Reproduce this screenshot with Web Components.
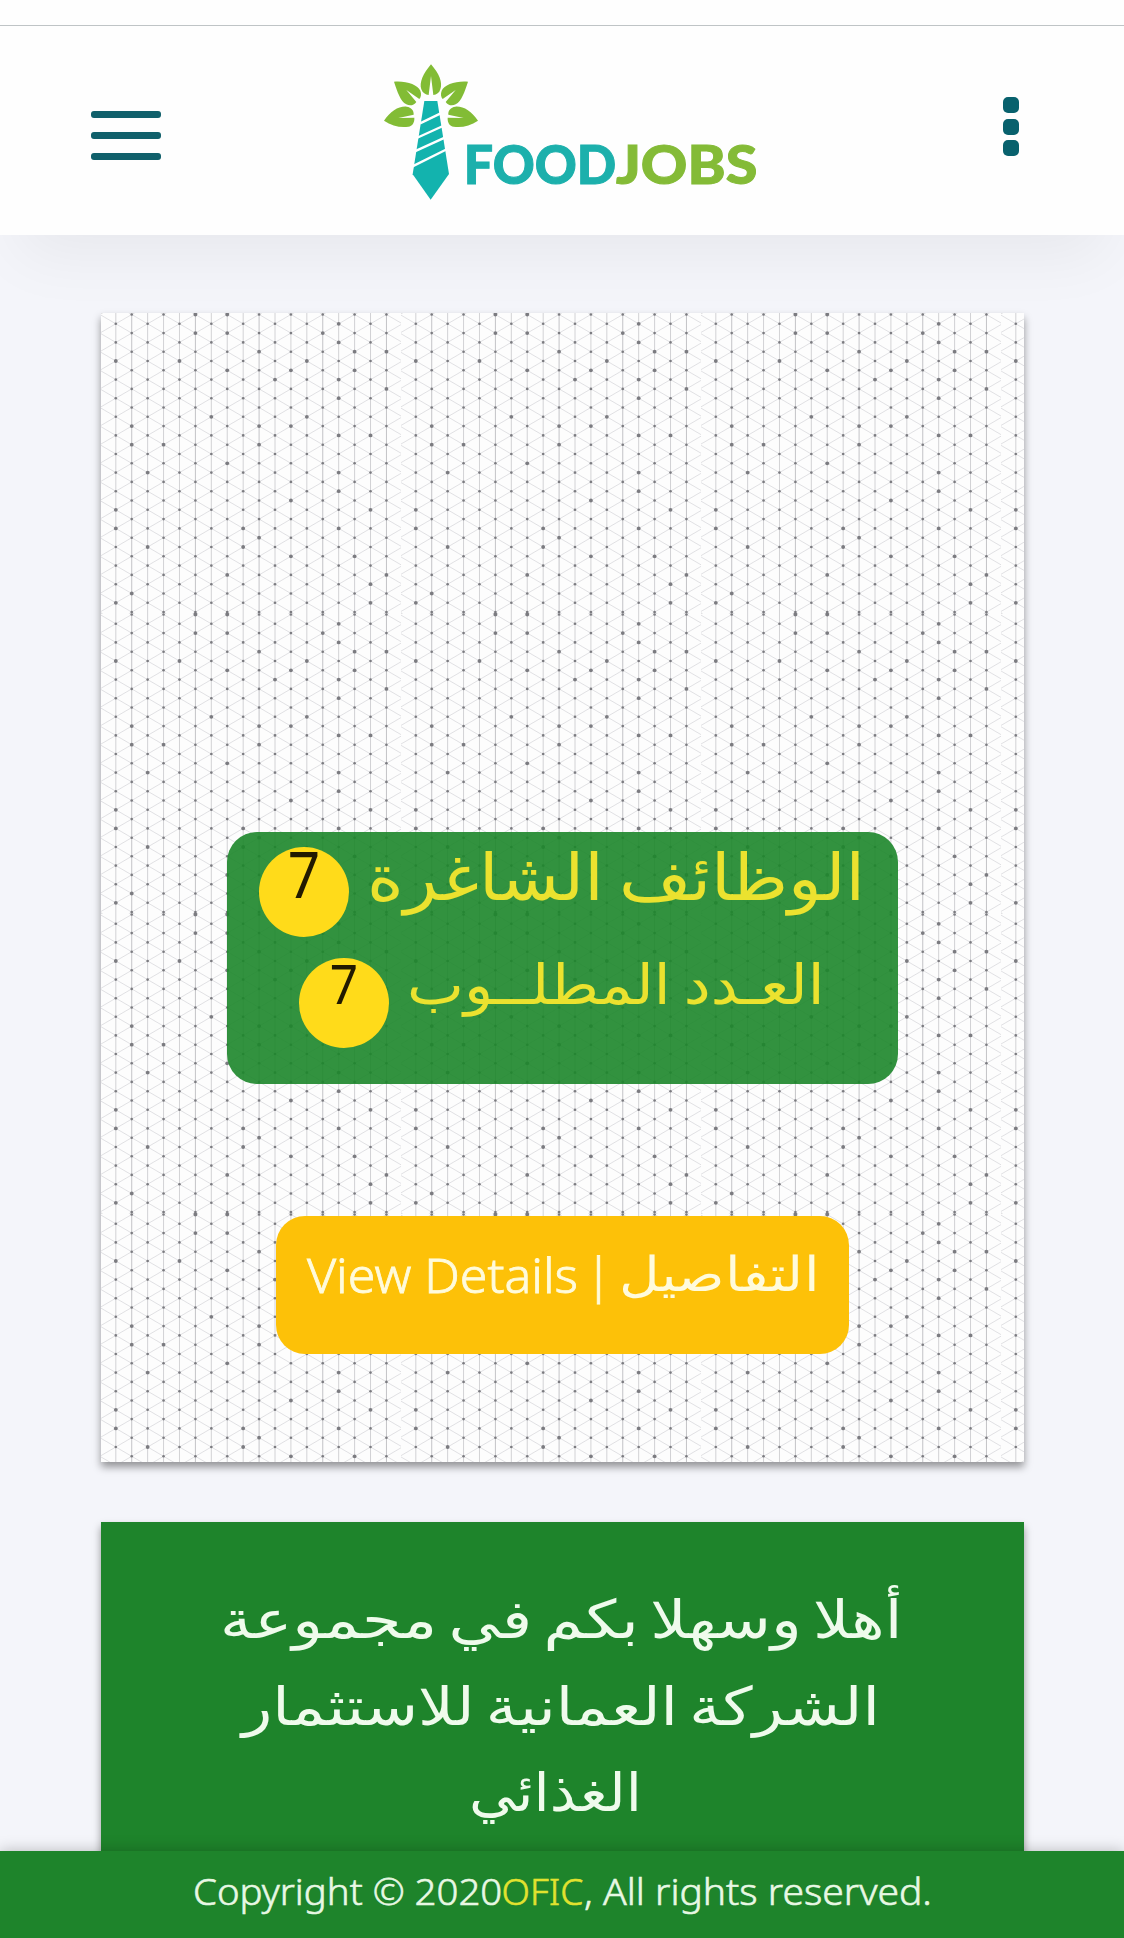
<!DOCTYPE html>
<html lang="ar">
<head>
<meta charset="utf-8">
<title>FoodJobs</title>
<style>
  body {
    margin: 0;
    height: 1938px;
    overflow: hidden;
    background: #f4f5fa;
    font-family: "Noto Sans", "DejaVu Sans", sans-serif;
  }
</style>
</head>
<body>
<fj-page>
  <fj-header slot="header"></fj-header>
  <fj-vacancy-card>
    <fj-count size="64" line="62" width="498" count="7" count-size="63" count-line="54">الوظائف الشاغرة</fj-count>
    <fj-count size="55" line="55" width="418" count="7" count-size="55" count-line="50">العـدد المطلــوب</fj-count>
    <fj-button slot="action">
      <fit-text width="271">View Details</fit-text>
      <fit-text width="27">|</fit-text>
      <fit-text class="ar" width="200" rtl>التفاصيل</fit-text>
    </fj-button>
  </fj-vacancy-card>
  <fj-welcome>
    <fit-text width="683" rtl style="margin-right: 3px">أهلا وسهلا بكم في مجموعة</fit-text>
    <fit-text width="638" rtl style="margin-right: 3px">الشركة العمانية للاستثمار</fit-text>
    <fit-text width="173" rtl style="margin-right: 15px">الغذائي</fit-text>
  </fj-welcome>
  <fj-footer slot="footer">
    <fit-text width="309">Copyright © 2020</fit-text>
    <fit-text width="82" style="color: #e2e22f">OFIC</fit-text>
    <fit-text width="348">, All rights reserved.</fit-text>
  </fj-footer>
</fj-page>

<script>
// one line of text, stretched or squeezed to a given width
class FitText extends HTMLElement {
  constructor() {
    super();
    this.attachShadow({ mode: 'open' });
    this.shadowRoot.innerHTML = `
      <style>
        :host { display: block; direction: ltr; white-space: nowrap; }
        span { display: inline-block; transform-origin: 0 50%; }
      </style>
      <span><slot></slot></span>
    `;
  }

  connectedCallback() {
    const span = this.shadowRoot.querySelector('span');
    const width = Number(this.getAttribute('width'));
    if (this.hasAttribute('rtl')) span.dir = 'rtl';
    this.style.width = width + 'px';
    requestAnimationFrame(() => this.fit(span, width));
    this.fit(span, width);
  }

  fit(span, width) {
    const natural = span.offsetWidth;
    if (natural) span.style.transform = `scaleX(${width / natural})`;
  }
}

class FjPage extends HTMLElement {
  constructor() {
    super();
    this.attachShadow({ mode: 'open' });
    this.shadowRoot.innerHTML = `
      <style>
        :host { display: flex; flex-direction: column; height: 1938px; overflow: hidden; }
        main {
          flex: 1;
          min-height: 0;
          display: flex;
          flex-direction: column;
          gap: 60px;
          padding: 78px 100px 0 101px;
        }
      </style>
      <slot name="header"></slot>
      <main><slot></slot></main>
      <slot name="footer"></slot>
    `;
  }
}

class FjHeader extends HTMLElement {
  constructor() {
    super();
    this.attachShadow({ mode: 'open' });
    this.shadowRoot.innerHTML = `
      <style>
        :host { display: block; background: #fefefe; padding-top: 25px;
          box-shadow: 0 40px 60px -20px rgba(0, 0, 0, .055);
        }
        .bar {
          box-sizing: border-box;
          height: 210px;
          border-top: 1px solid #bfc4c6;
          display: flex;
          align-items: flex-start;
          padding: 0 105px 0 91px;
        }
        .menu { display: grid; gap: 14px; width: 70px; margin-top: 85px; }
        .menu i { height: 7px; border-radius: 3px; background: #10606b; }
        .logo { margin: 24px auto 0 209px; }
        .more { display: grid; gap: 5.5px; width: 16px; margin-top: 71px; }
        .more i { height: 16px; border-radius: 5px; background: #08616d; }
      </style>
      <div class="bar">
        <div class="menu"><i></i><i></i><i></i></div>
        <svg class="logo" width="400" height="160" viewBox="0 0 1200 480">
          <g fill="#82bc35">
            <path d="M183 43C207 70 219 98 211 118C208 129 200 134 190 135L183 78L176 135C166 134 158 129 154 118C147 98 160 70 183 43Z"/>
            <path id="up" d="M72 95C109 92 143 104 151 122C155 132 153 141 148 147L109 120L139 156C132 166 120 169 109 163C91 154 82 124 72 95Z"/>
            <path id="low" d="M42 212C61 184 86 168 110 170C124 172 132 181 131 194L85 204L133 203C134 218 127 228 115 230C91 234 65 227 42 212Z"/>
            <use href="#up" transform="matrix(-1 0 0 1 366 0)"/>
            <use href="#low" transform="matrix(-1 0 0 1 366 0)"/>
          </g>
          <path fill="#13b3ae" d="M163 153H202L237 372L182 449L128 373Z"/>
          <path stroke="#fff" stroke-width="7" d="M150 220L212 190M140 264L219 228M134 304L226 262M126 350L232 297"/>
          <g font-family="Lato" font-weight="900" font-size="161" stroke-width="3">
            <text x="281" y="402" fill="#1cb0ac" stroke="#1cb0ac" textLength="458" lengthAdjust="spacingAndGlyphs">FOOD</text>
            <text x="738" y="402" fill="#84bb37" stroke="#84bb37" textLength="424" lengthAdjust="spacingAndGlyphs">JOBS</text>
          </g>
        </svg>
        <div class="more"><i></i><i></i><i></i></div>
      </div>
    `;
  }
}

// 300px tile of the triangular mesh: 18 columns of dots, odd columns half a step up
const COL = 15.92;
const ROW = 18.6;
const BIG = {
  0: [2, 10, 11, 15], 1: [6, 7, 15], 2: [8, 12], 3: [7], 4: [2],
  5: [0, 1], 6: [5], 7: [0, 1, 3, 8, 14], 8: [11, 12], 9: [2, 6, 7, 12],
  10: [3], 11: [3, 6, 10, 13], 12: [2, 5], 13: [1], 14: [0, 1, 3, 4, 6, 8, 9, 11],
  15: [2, 3, 13], 16: [6, 10, 14, 15], 17: [2, 4, 14]
};

function meshTile() {
  let lines = '';
  let dots = '';
  for (let k = -1; k <= 18; k++) {
    const x = 14.8 + k * COL;
    const odd = Math.abs(k) % 2;
    if (k >= 0 && k < 18) {
      lines += `<path d="M${x} 0V300" stroke="${k % 4 === 1 ? '#b4b4b9' : '#c6c6ca'}" stroke-width=".8"/>`;
    }
    for (let j = -1; j <= 17; j++) {
      const y = (odd ? 1.5 : 10.8) + j * ROW;
      lines += `<path d="M${x} ${y}l${COL} ${ROW / 2}M${x} ${y}l${COL} ${-ROW / 2}"/>`;
      if (k < 0 || k > 17 || j < 0) continue;
      const r = BIG[k].includes(j) ? 1.9 : 1.3;
      dots += `<circle cx="${x}" cy="${y}" r="${r}"/>`;
    }
  }
  return `<g fill="none" stroke="#c3c3c8" stroke-width=".5">${lines}</g><g fill="#7b7b80">${dots}</g>`;
}

class FjVacancyCard extends HTMLElement {
  constructor() {
    super();
    this.attachShadow({ mode: 'open' });
    this.shadowRoot.innerHTML = `
      <style>
        :host { position: relative;
          box-sizing: border-box;
          flex: none;
          height: 1149px;
          padding-top: 519px;
          display: flex;
          flex-direction: column;
          align-items: center;
          gap: 132px;
          background: #fdfdfd;
          box-shadow: 0 5px 8px rgba(0, 0, 0, .4);
        }
        .mesh { position: absolute; inset: 0; width: 100%; height: 100%; }
        .panel { position: relative;
          box-sizing: border-box;
          width: 671px;
          height: 252px;
          padding: 15px 2px 0 0;
          display: flex;
          flex-direction: column;
          align-items: center;
          gap: 21px;
          border-radius: 30px;
          background: rgba(28, 134, 42, .9);
        }
        ::slotted([slot="action"]) { position: relative; }
      </style>
      <svg class="mesh">
        <defs>
          <pattern id="tile" width="300" height="300" patternUnits="userSpaceOnUse">${meshTile()}</pattern>
        </defs>
        <rect width="100%" height="100%" fill="url(#tile)"/>
      </svg>
      <div class="panel"><slot></slot></div>
      <slot name="action"></slot>
    `;
  }
}

class FjCount extends HTMLElement {
  constructor() {
    super();
    this.attachShadow({ mode: 'open' });
    const at = name => this.getAttribute(name);
    this.shadowRoot.innerHTML = `
      <style>
        :host { display: flex; gap: 18px; height: 90px; }
        .badge {
          width: 90px;
          height: 90px;
          border-radius: 50%;
          background: #ffdb1a;
          color: #221a00;
          text-align: center;
          font-size: ${at('count-size')}px;
          line-height: ${at('count-line')}px;
        }
        .digit { display: block; transform: scaleX(.9); }
        fit-text {
          color: #ebe22f;
          font-family: "DejaVu Sans", sans-serif;
          font-size: ${at('size')}px;
          line-height: ${at('line')}px;
          word-spacing: -.1em;
        }
      </style>
      <div class="badge"><span class="digit">${at('count')}</span></div>
      <fit-text width="${at('width')}" rtl><slot></slot></fit-text>
    `;
  }
}

class FjButton extends HTMLElement {
  constructor() {
    super();
    this.attachShadow({ mode: 'open' });
    this.shadowRoot.innerHTML = `
      <style>
        :host {
          display: flex;
          justify-content: center;
          gap: 7px;
          box-sizing: border-box;
          width: 573px;
          height: 138px;
          border-radius: 29px;
          background: #fdc108;
          color: #fffbdc;
          font-size: 48px;
          font-weight: 300;
          line-height: 117px;
          -webkit-text-stroke: .8px #fffbdc;
        }
        ::slotted(.ar) {
          font-family: "DejaVu Sans", sans-serif;
          font-size: 48px;
          -webkit-text-stroke: 0;
        }
      </style>
      <slot></slot>
    `;
  }
}

class FjWelcome extends HTMLElement {
  constructor() {
    super();
    this.attachShadow({ mode: 'open' });
    this.shadowRoot.innerHTML = `
      <style>
        :host {
          box-sizing: border-box;
          flex: none;
          height: 400px;
          padding-top: 55px;
          display: flex;
          flex-direction: column;
          align-items: center;
          background: #1e842b;
          box-shadow: 0 5px 8px rgba(0, 0, 0, .4);
          color: #effbec;
          font-family: "DejaVu Sans", sans-serif;
          font-size: 53px;
          line-height: 86.7px;
          word-spacing: -.14em;
        }
      </style>
      <slot></slot>
    `;
  }
}

class FjFooter extends HTMLElement {
  constructor() {
    super();
    this.attachShadow({ mode: 'open' });
    this.shadowRoot.innerHTML = `
      <style>
        :host { position: relative;
          flex: none;
          height: 87px;
          display: flex;
          justify-content: center;
          background: #1e842b;
          box-shadow: 0 0 14px rgba(0, 0, 0, .25);
          color: #e8f8e4;
          font-size: 37px;
          font-weight: 300;
          line-height: 80px;
          -webkit-text-stroke: .6px currentColor;
        }
        ::slotted(*) { -webkit-text-stroke: .6px currentColor; }
      </style>
      <slot></slot>
    `;
  }
}

customElements.define('fit-text', FitText);
customElements.define('fj-page', FjPage);
customElements.define('fj-header', FjHeader);
customElements.define('fj-vacancy-card', FjVacancyCard);
customElements.define('fj-count', FjCount);
customElements.define('fj-button', FjButton);
customElements.define('fj-welcome', FjWelcome);
customElements.define('fj-footer', FjFooter);
</script>
</body>
</html>
